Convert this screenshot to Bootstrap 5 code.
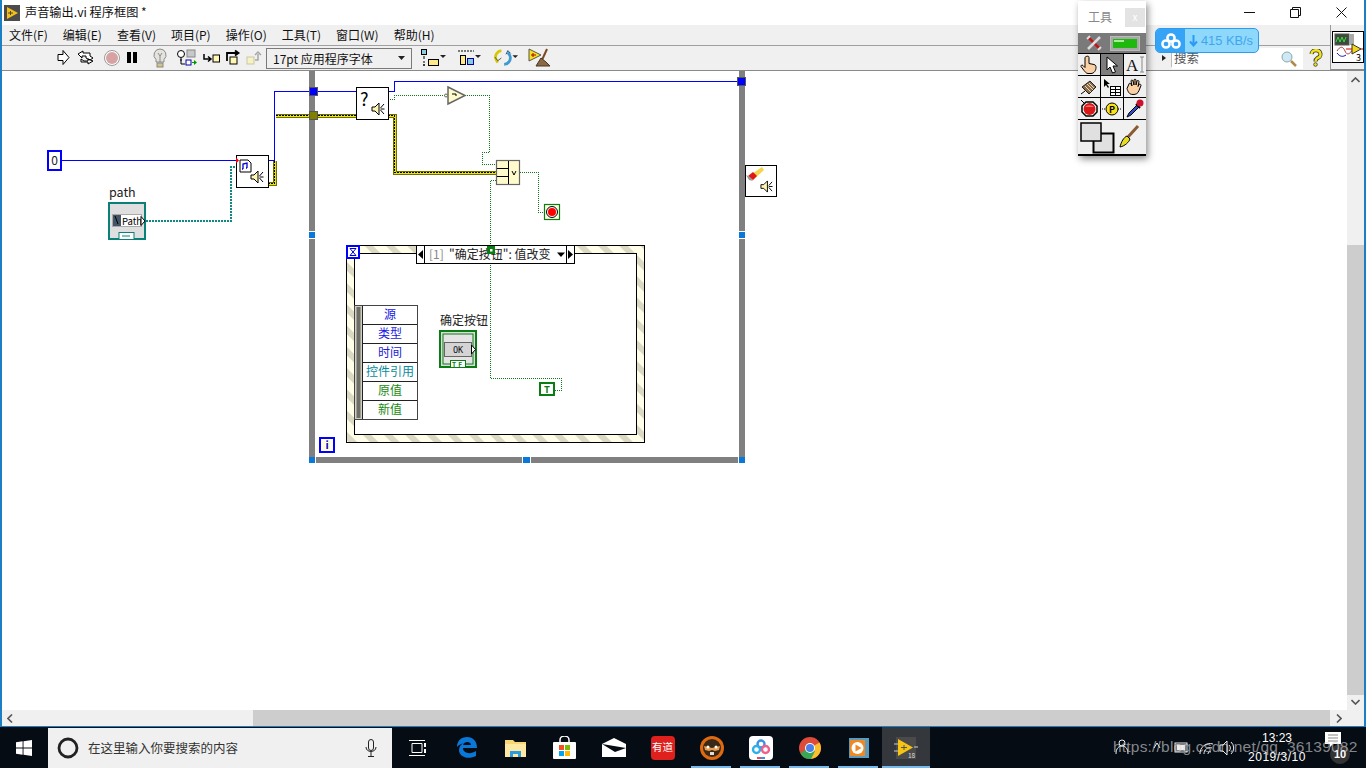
<!DOCTYPE html>
<html lang="zh">
<head>
    <meta charset="UTF-8">
    <title>声音输出.vi 程序框图 *</title>
    <link href="https://cdn.jsdelivr.net/npm/bootstrap@5.3.0/dist/css/bootstrap.min.css" rel="stylesheet">
    <style>
        html, body { height: 768px; overflow: hidden; }
        body { font-family: "Noto Sans CJK SC", "Liberation Sans", sans-serif; font-size: 12px; color: #111; background: #fff; }
        svg { display: block; flex: none; }
        svg text { font-family: "Noto Sans CJK SC", "Liberation Sans", sans-serif; }
        .wires { shape-rendering: crispEdges; }

        .lv-window { width: 1366px; height: 727px; border-left: 2px solid #1c7fc4; border-right: 2px solid #1c7fc4; border-bottom: 1px solid #1c7fc4; }
        .lv-title { height: 25px; padding-left: 2px; gap: 5px; font-size: 12.2px; }
        .lv-winbtns { margin-left: auto; }
        .lv-winbtn { width: 46px; height: 25px; }
        .lv-menu { height: 20px; background: #f0f0f0; padding-left: 7px; gap: 15px; font-size: 12px; line-height: 20px; }
        .lv-menu span { white-space: nowrap; }
        .lv-tools { height: 26px; background: #f0f0f0; border-top: 1px solid #a0a0a0; border-bottom: 1px solid #8a8a8a; padding-left: 55px; }
        .lv-combo { width: 146px; height: 21px; margin: 0 9px 0 3px; border: 1px solid #7a7a7a; padding: 0 6px; font-size: 12px; line-height: 19px; white-space: nowrap; }
        .tool-gap-a { margin-left: 11px; }
        .tool-gap-b { margin-left: 13px; }
        .tool-gap-c { margin-left: 10px; }
        .lv-search { margin-left: auto; width: 169px; height: 24px; }
        .lv-searchbox { width: 131px; height: 21px; background: #fff; color: #555; padding-left: 2px; font-size: 12.5px; line-height: 20px; }
        .lens { right: 5px; top: 2px; }
        .help-mark { margin-right: 7px; }
        .lv-vi { width: 34px; height: 45px; margin-top: -21px; border-left: 1px solid #9a9a9a; border-bottom: 1px solid #8a8a8a; background: #f0f0f0; padding: 6px 0 0 1px; z-index: 2; }

        .lv-body { height: 639px; }
        .lv-canvas { width: 1345px; height: 639px; overflow: hidden; }
        .lv-vscroll { width: 17px; background: #f0f0f0; }
        .lv-vthumb { position: absolute; left: 0; right: 0; top: 174px; height: 450px; background: #cdcdcd; }
        .arrow-up { left: 4px; top: 6px; }
        .arrow-down { left: 4px; top: 628px; }
        .lv-hscroll { height: 16px; background: #f0f0f0; padding-right: 17px; }
        .lv-hthumb { width: 1077px; height: 16px; background: #cdcdcd; margin-left: 251px; }
        .arrow-left { left: 5px; top: 4px; }
        .arrow-right { left: 1334px; top: 4px; }

        .tool-palette { position: absolute; left: 1078px; top: 1px; width: 68px; height: 155px; background: #000; box-shadow: 2px 3px 7px rgba(0,0,0,.45); z-index: 5; }
        .tool-head { height: 32px; background: #fff; color: #888; font-size: 12px; padding-left: 10px; }
        .tool-x { width: 20px; height: 19px; background: #e3e3e3; color: #fff; text-align: center; line-height: 18px; font-size: 10px; margin-left: auto; margin-right: 1px; }
        .tool-auto { height: 20px; background: #7a7a7a; padding: 0 6px 0 8px; }
        .tool-grid { display: grid; grid-template-columns: repeat(3, 22px); gap: 1px; padding-top: 1px; }
        .tool-cell { height: 21px; background: #f0f0f0; }
        .tool-cell-on { background: #7d7d7d; }
        .tool-colors { height: 34px; background: #f0f0f0; margin-top: 1px; }

        .net-speed { position: absolute; left: 1155px; top: 28px; width: 104px; height: 25px; background: #8ed8fc; border: 1px solid #2a9cf2; border-radius: 5px; overflow: hidden; z-index: 6; color: #3fa6ee; font-size: 12.8px; font-family: "Liberation Sans", sans-serif; }
        .net-logo { width: 29px; height: 100%; background: #35a3f6; }
        .net-rate { margin-left: 3px; }

        .task-bar { height: 41px; background: #060c14; color: #fff; }
        .task-start { width: 48px; }
        .task-search { width: 344px; background: #f0f0f0; color: #333; font-size: 12.5px; padding: 0 15px 0 9px; margin-top: 1px; margin-right: 1px; }
        .task-search-text { margin-left: 9px; }
        .task-icon { width: 49px; height: 41px; }
        .task-on::after { content: ""; position: absolute; left: 4px; right: 5px; bottom: 0; height: 2px; background: #76b9ed; }
        .task-active { background: #34373c; width: 48px; margin-left: -1px; }
        .task-active::after { left: 0; right: 0; }
        .youdao { width: 24px; height: 24px; background: #e0201c; color: #fff; font-size: 10.5px; line-height: 1; white-space: nowrap; }
        .tray { left: 1113px; top: 9px; }
        .task-clock { position: absolute; left: 1240px; top: 0; width: 74px; text-align: center; font-size: 12px; line-height: 19px; padding-top: 2px; font-family: "Liberation Sans", sans-serif; }
        .task-date { letter-spacing: .5px; white-space: nowrap; }
        .task-mark { position: absolute; left: 1113px; top: 8px; font-size: 15.5px; color: rgba(215,215,215,.62); white-space: nowrap; font-family: "Liberation Sans", sans-serif; letter-spacing: .2px; z-index: 3; }
        .notify-icon { left: 1325px; top: 5px; }
        .notify-count { left: 1330px; top: 17px; width: 20px; height: 20px; background: #333; font-size: 11px; font-weight: bold; font-family: "Liberation Sans", sans-serif; }
        .mono-ok { font-family: "DejaVu Sans Mono", monospace !important; }
        .serif-a { font-family: "Liberation Serif", serif !important; }
    </style>
</head>
<body class="position-relative">

<svg width="0" height="0" class="position-absolute">
    <defs>
        <pattern id="hatch" width="15" height="15" patternUnits="userSpaceOnUse" patternTransform="rotate(45)">
            <rect width="15" height="15" fill="#fffee8"/>
            <rect width="15" height="6" fill="#dbd9c4"/>
        </pattern>
        <symbol id="speaker" viewBox="0 0 14 14">
            <path d="M1 5h3l4-4v12l-4-4H1z" fill="#fff6b0" stroke="#000"/>
            <path d="M9.500 7h4M9.500 6l3.500-4M9.500 8l3.500 4" stroke="#000" fill="none"/>
        </symbol>
    </defs>
</svg>

<div class="lv-window d-flex flex-column">
    <!-- title bar -->
    <div class="lv-title d-flex align-items-center">
        <svg width="16" height="16" viewBox="0 0 16 16"><rect width="16" height="16" fill="#4b4b4b"/><path d="M3 2l11 6-11 6z" fill="#f6bf14"/><path d="M4 8h5M6.500 6v4" stroke="#444"/></svg>
        <span>声音输出.vi 程序框图 *</span>
        <div class="lv-winbtns d-flex">
            <div class="lv-winbtn d-flex align-items-center justify-content-center"><svg width="11" height="11"><path d="M0 5.500h11" stroke="#111"/></svg></div>
            <div class="lv-winbtn d-flex align-items-center justify-content-center"><svg width="11" height="11"><path d="M.5 2.500h8v8h-8zM2.500 2.500v-2h8v8h-2" fill="none" stroke="#111"/></svg></div>
            <div class="lv-winbtn d-flex align-items-center justify-content-center"><svg width="11" height="11"><path d="M.5.500l10 10M10.500.500l-10 10" stroke="#111"/></svg></div>
        </div>
    </div>

    <!-- menu bar -->
    <nav class="lv-menu d-flex">
        <span>文件(F)</span><span>编辑(E)</span><span>查看(V)</span><span>项目(P)</span><span>操作(O)</span><span>工具(T)</span><span>窗口(W)</span><span>帮助(H)</span>
    </nav>

    <!-- toolbar -->
    <div class="lv-tools d-flex align-items-center">
        <svg width="206" height="20" viewBox="0 0 206 20">
            <path d="M1 6.500h5v-4l6 7-6 7v-4H1z" fill="#fff" stroke="#000"/>
            <path d="M21 6l5-3v2h7v3l3 2-3 2-4-2v-2h-4v2zM36 13l-5 3v-2h-7v-3l3 2h4v-2z" fill="#fff" stroke="#000"/>
            <circle cx="55" cy="10" r="7.500" fill="#fff" stroke="#999"/>
            <circle cx="55" cy="10" r="6" fill="#d6a2a2"/>
            <rect x="70" y="4" width="4" height="11" fill="#000"/><rect x="76" y="4" width="4" height="11" fill="#000"/>
            <path d="M101 1a6 6 0 0 1 4 10.500V14h-8v-2.500A6 6 0 0 1 101 1z" transform="translate(2 0)" fill="#e4e4dc" stroke="#8a8a8a"/><path d="M101 5l2 3 2-3M103 8v6" fill="none" stroke="#8a8a8a"/><rect x="100" y="15" width="6" height="4" fill="#cfc48a" stroke="#8a8a8a"/>
            <circle cx="124" cy="6" r="3.500" fill="#fff" stroke="#000"/><rect x="130" y="2" width="8" height="7" fill="#c8c8c8" stroke="#888"/><path d="M124 10v6h4M123 12h2" stroke="#000" fill="none"/><rect x="129" y="12" width="5" height="5" fill="#fff" stroke="#00a"/><path d="M135 14.500h2" stroke="#090"/><path d="M137 12l3 2.500-3 2.500z" fill="#090"/>
            <path d="M147 6v5h6M151 8.500l3 2.500-3 2.500" fill="none" stroke="#000" stroke-width="1.500"/><rect x="156" y="7" width="6.500" height="7" fill="#fff8b4" stroke="#000"/>
            <path d="M170 13V5h11M178 2.500l3.500 2.500-3.500 2.500" fill="none" stroke="#000" stroke-width="1.800"/><rect x="173" y="9" width="7" height="7" fill="#fff8b4" stroke="#000"/>
            <rect x="190" y="9" width="7" height="7" fill="#f6f2c4" stroke="#c8c8a8"/><path d="M198 12h3v-6M198 7l3-3 3 3" fill="none" stroke="#a5a5a5" stroke-width="1.500"/>
        </svg>
        <div class="lv-combo d-flex justify-content-between align-items-center">
            <span>17pt 应用程序字体</span>
            <svg width="7" height="4"><path d="M0 0h7l-3.500 4z" fill="#222"/></svg>
        </div>
        <svg width="25" height="20" viewBox="0 0 25 20">
            <rect x=".5" y="1.500" width="5" height="5" fill="#8cd" stroke="#000"/><path d="M3 8v3M3 13v2" stroke="#000"/><circle cx="3" cy="17" r="1" fill="#000"/><rect x="7.500" y="11.500" width="10" height="6" fill="#ffe98a" stroke="#000"/><path d="M19 7h6l-3 3z" fill="#222"/>
        </svg>
        <svg class="tool-gap-a" width="24" height="20" viewBox="0 0 24 20">
            <path d="M1 3h16" stroke="#000" stroke-dasharray="2 1"/><rect x="3.500" y="7.500" width="5" height="9" fill="#ffe98a" stroke="#000"/><rect x="10.500" y="10.500" width="6" height="6" fill="#8cd" stroke="#00a"/><path d="M18 7h6l-3 3z" fill="#222"/>
        </svg>
        <svg class="tool-gap-b" width="24" height="20" viewBox="0 0 26 20">
            <path d="M8 2a7 7 0 0 0-6 9l2 4" fill="none" stroke="#d5c800" stroke-width="3"/><path d="M1 9l3 4 4-3" fill="none" stroke="#555"/>
            <path d="M11 17a7 7 0 0 0 6-10l-2-3" fill="none" stroke="#3d9ad0" stroke-width="3"/><path d="M13 6l2-4 3 3" fill="none" stroke="#246"/><path d="M20 7h6l-3 3z" fill="#222"/>
        </svg>
        <svg class="tool-gap-c" width="24" height="20" viewBox="0 0 24 20">
            <path d="M1 1l12 6-12 6z" fill="#f6e21a" stroke="#555"/><path d="M3 7h5M5 5v4" stroke="#a00"/>
            <path d="M19 1l-5 11" stroke="#7a4a20" stroke-width="2"/><path d="M8 18l5-8 5 4 4 4z" fill="#8a6a44" stroke="#4a3420"/>
        </svg>
        <div class="lv-search d-flex align-items-center">
            <svg width="11" height="18"><path d="M1 6l4 3-4 3z" fill="#222"/><path d="M10.500 0v18" stroke="#bbb"/></svg>
            <div class="lv-searchbox d-flex position-relative">
                <span>搜索</span>
                <svg class="position-absolute lens" width="18" height="18" viewBox="0 0 18 18"><circle cx="7" cy="7" r="5" fill="#cfe8f6" stroke="#8aa"/><path d="M11 11l5 5" stroke="#b08a4a" stroke-width="2.500"/></svg>
            </div>
            <svg class="ms-auto help-mark" width="14" height="18" viewBox="0 0 14 18"><path d="M2.500 5a4.500 4 0 1 1 6 4c-1.500 1-2 1.500-2 3.500" fill="none" stroke="#333" stroke-width="4"/><path d="M2.500 5a4.500 4 0 1 1 6 4c-1.500 1-2 1.500-2 3.500" fill="none" stroke="#f2e418" stroke-width="2.400"/><circle cx="6.500" cy="15.500" r="1.800" fill="#f2e418" stroke="#333" stroke-width=".8"/></svg>
        </div>
        <div class="lv-vi position-relative align-self-start">
            <svg width="32" height="32" viewBox="0 0 32 32"><rect x=".5" y=".5" width="31" height="31" fill="#fff" stroke="#000"/><rect x="3" y="3" width="14" height="11" fill="#3c4a3c" stroke="#555"/><path d="M4 11l2-5 2 5 2-5 2 5 2-5" fill="none" stroke="#3cdc3c"/><rect x="17" y="3" width="5" height="11" fill="#aaa"/><path d="M5 20c3-5 6-5 8 0s5 3 8-2" fill="none" stroke="#b33"/><path d="M5 22c3 4 6 4 9 2" fill="none" stroke="#11a"/><path d="M20 13l9 5-9 5z" fill="#f4d818" stroke="#333"/><path d="M14 18h6M29 18h2" stroke="#c00"/><text x="24" y="30" font-size="9" fill="#000">3</text></svg>
        </div>
    </div>

    <!-- block diagram + vertical scrollbar -->
    <div class="lv-body d-flex">
        <div class="lv-canvas position-relative">
            <svg class="position-absolute top-0 start-0" width="1345" height="639" viewBox="2 71 1345 639">
                <!-- while loop frame -->
                <rect x="309" y="60" width="6" height="403" fill="#808080"/>
                <rect x="739" y="60" width="6" height="403" fill="#808080"/>
                <rect x="309" y="457" width="436" height="6" fill="#808080"/>
                <g fill="#fff">
                    <rect x="309" y="231" width="6" height="8"/><rect x="739" y="231" width="6" height="8"/>
                    <rect x="315" y="457" width="1" height="6"/><rect x="522" y="457" width="9" height="6"/><rect x="738" y="457" width="1" height="6"/>
                </g>
                <g fill="#0a78d8">
                    <rect x="309" y="232" width="6" height="6"/><rect x="739" y="232" width="6" height="6"/>
                    <rect x="309" y="457" width="6" height="6"/><rect x="523" y="457" width="7" height="6"/><rect x="739" y="457" width="6" height="6"/>
                </g>

                <!-- event structure -->
                <rect x="346.500" y="245.500" width="298" height="197" fill="url(#hatch)" stroke="#000"/>
                <rect x="354.500" y="253.500" width="282" height="181" fill="#fff" stroke="#000"/>

                <!-- wires -->
                <g class="wires" fill="none">
                    <g stroke="#0000ff">
                        <path d="M61 160.500H236"/>
                        <path d="M268 160.500h6.500V91.500H356"/>
                        <path d="M388 91.500h6.500V81.500H738"/>
                    </g>
                    <path d="M146 221h84.500V167H236" stroke="#0e8a80" stroke-width="2" stroke-dasharray="2 1"/>
                    <path d="M276 115.500H356M388 115.500h6.500V172.500H496M268 183.500h6.500V161" stroke="#6e6e08" stroke-width="4"/>
                    <path d="M276 115.500H356M388 115.500h6.500V172.500H496M268 183.500h6.500V161" stroke="#ece410" stroke-width="2"/>
                    <path d="M276 115.500H356M388 115.500h6.500V172.500H496M268 183.500h6.500V161" stroke="#000" stroke-dasharray="2 1"/>
                    <g stroke="#0a7c14" stroke-dasharray="1 1">
                        <path d="M388 99.500h6.500V95.500H445"/>
                        <path d="M465 95.500h24.500V152.500H482.500V164.500H496"/>
                        <path d="M520 172.500h18.500V212.500H544"/>
                        <path d="M496 180.500H490.500V378.500H561.500V390.500H555"/>
                    </g>
                </g>

                <!-- tunnels -->
                <rect x="309.500" y="87.500" width="8" height="8" fill="#0000ff" stroke="#555"/>
                <rect x="309.500" y="111.500" width="8" height="8" fill="#808000" stroke="#555"/>
                <rect x="737.500" y="77.500" width="8" height="8" fill="#0000ff" stroke="#555"/>

                <!-- numeric constant -->
                <rect x="48" y="151" width="13" height="19" fill="#fff" stroke="#0000ff" stroke-width="2"/>
                <text x="54.500" y="165" font-size="12" text-anchor="middle" fill="#222">0</text>

                <!-- path terminal -->
                <text x="109" y="197" font-size="12.500" fill="#222">path</text>
                <rect x="109" y="203" width="36" height="36" fill="#dfdfdf" stroke="#0a8078" stroke-width="2"/>
                <rect x="112" y="214" width="30" height="13" fill="#aaa"/>
                <rect x="113" y="215" width="8" height="11" fill="#456"/>
                <path d="M115 216l3 8" stroke="#000"/>
                <rect x="121" y="215" width="20" height="11" fill="#fff"/>
                <text x="122" y="224.500" font-size="9.500" fill="#000">Path</text>
                <path d="M141 216.500l4 4.500-4 4.500z" fill="#fff" stroke="#000"/>
                <rect x="119" y="232.500" width="15" height="7" fill="#fff" stroke="#0a8078"/>
                <path d="M122 236h8" stroke="#0a8078"/>

                <!-- sound nodes -->
                <rect x="236.500" y="155.500" width="32" height="32" fill="#fff" stroke="#000"/>
                <path d="M240 160h8l3 3v9h-11z" fill="#fff" stroke="#000"/>
                <path d="M243 169v-5l4-1v5M243 169h-1M247 168h-1" stroke="#0000d8" fill="none" stroke-width="1.300"/>
                <use href="#speaker" x="250" y="170" width="14" height="14"/>
                <path d="M236 157.500l3 3-3 3z" fill="#f00"/>

                <rect x="356.500" y="87.500" width="32" height="32" fill="#fff" stroke="#000"/>
                <text x="360" y="106" font-size="18" fill="#000">?</text>
                <use href="#speaker" x="371" y="102" width="14" height="14"/>

                <rect x="745.500" y="165.500" width="31" height="31" fill="#fff" stroke="#000"/>
                <path d="M749 176l13-9 2 3-11 10z" fill="#f4d648"/><path d="M748 176l5-4 4 4-4 4z" fill="#e01818"/><path d="M746 175l3 5 4 1-3-4z" fill="#999"/>
                <use href="#speaker" x="760" y="180" width="13" height="13"/>

                <!-- not / compound -->
                <path d="M448 87l17 8.500-17 8.500z" fill="#fffbcc" stroke="#666" stroke-width="1.500"/>
                <circle cx="446" cy="95.500" r="1.500" fill="#fffbcc" stroke="#666"/>
                <path d="M452 94h4v2" fill="none" stroke="#000"/>

                <rect x="496.500" y="160.500" width="23" height="24" fill="#fffbcc" stroke="#666" stroke-width="1.200"/>
                <path d="M508.500 161v23M497 168.500h11M497 176.500h11" stroke="#000"/>
                <path d="M512 171l2 4 2-4" fill="none" stroke="#000"/>

                <!-- stop -->
                <rect x="544.500" y="204.500" width="15" height="15" fill="#fffde4" stroke="#0a7c14" stroke-width="1.200"/>
                <circle cx="552" cy="212" r="5.500" fill="#f8f8f8" stroke="#000"/>
                <circle cx="552" cy="212" r="4" fill="#f00"/>

                <!-- selector -->
                <rect x="416.500" y="245.500" width="158" height="18" fill="#fff" stroke="#000"/>
                <path d="M424.500 246v17M566.500 246v17" stroke="#000"/>
                <path d="M423 250v9l-5-4.500zM568 250v9l5-4.500z" fill="#000"/>
                <text x="429" y="258.500" font-size="12" fill="#888">[1]</text>
                <text x="449" y="258.500" font-size="12" fill="#222">"确定按钮": 值改变</text>
                <path d="M557 252.500h8l-4 4.500z" fill="#000"/>
                <rect x="487" y="246" width="8" height="8" fill="#0a7c14"/><rect x="490" y="249" width="2.500" height="2.500" fill="#fff"/>

                <!-- hourglass / iteration -->
                <rect x="347" y="246" width="12" height="12" fill="#fff" stroke="#0000ff" stroke-width="2"/>
                <path d="M350 248.500h6l-6 7h6z" fill="#fff" stroke="#0000c8"/>
                <rect x="320" y="438" width="14" height="14" fill="#fffde4" stroke="#0000ff" stroke-width="2"/>
                <text x="327" y="449" font-size="10.500" text-anchor="middle" font-weight="bold" fill="#0000c8">i</text>

                <!-- event data node -->
                <rect x="354.500" y="305.500" width="63" height="114" fill="#fff" stroke="#444"/>
                <rect x="355" y="306" width="7" height="113" fill="#cfcfc4"/>
                <rect x="356.500" y="307" width="4" height="111" fill="#6e6e64"/>
                <path d="M362.500 306v113M362 324.500h55M362 343.500h55M362 362.500h55M362 381.500h55M362 400.500h55" stroke="#222"/>
                <g font-size="12" text-anchor="middle">
                    <text x="390" y="319" fill="#1a1ae0">源</text>
                    <text x="390" y="338" fill="#1a1ae0">类型</text>
                    <text x="390" y="357" fill="#2020d0">时间</text>
                    <text x="390" y="376" fill="#0a8c9a">控件引用</text>
                    <text x="390" y="395" fill="#1c8a14">原值</text>
                    <text x="390" y="414" fill="#1c8a14">新值</text>
                </g>

                <!-- OK terminal -->
                <text x="440" y="325" font-size="12" fill="#222">确定按钮</text>
                <rect x="440" y="331" width="36" height="36" fill="#dcdcdc" stroke="#0a7c14" stroke-width="2"/>
                <rect x="443" y="334" width="30" height="30" fill="#e4e4e4" stroke="#0a7c14"/>
                <rect x="444.500" y="342.500" width="27" height="14" fill="#d4d4d4" stroke="#666"/>
                <text class="mono-ok" x="458" y="353" font-size="8.500" text-anchor="middle" fill="#111">OK</text>
                <path d="M471.500 345l4 4.500-4 4.500z" fill="#fff" stroke="#000"/>
                <rect x="450.500" y="360.500" width="15" height="7" fill="#fff" stroke="#0a7c14"/>
                <text x="458" y="367" font-size="6.500" text-anchor="middle" font-weight="bold" fill="#0a7c14" letter-spacing="2">TF</text>

                <!-- true constant -->
                <rect x="539" y="382" width="16" height="14" fill="#0a7c14"/>
                <rect x="541" y="384" width="12" height="10" fill="#fff"/>
                <text x="547" y="393" font-size="9.500" text-anchor="middle" font-weight="bold" fill="#0a7c14">T</text>
            </svg>
        </div>
        <div class="lv-vscroll position-relative">
            <div class="lv-vthumb"></div>
            <svg class="position-absolute arrow-up" width="9" height="6"><path d="M.5 5l4-4 4 4" fill="none" stroke="#555" stroke-width="1.600"/></svg>
            <svg class="position-absolute arrow-down" width="9" height="6"><path d="M.5 1l4 4 4-4" fill="none" stroke="#555" stroke-width="1.600"/></svg>
        </div>
    </div>

    <!-- horizontal scrollbar -->
    <div class="lv-hscroll d-flex position-relative">
        <svg class="position-absolute arrow-left" width="6" height="9"><path d="M5 .500l-4 4 4 4" fill="none" stroke="#555" stroke-width="1.600"/></svg>
        <div class="lv-hthumb"></div>
        <svg class="position-absolute arrow-right" width="6" height="9"><path d="M1 .500l4 4-4 4" fill="none" stroke="#555" stroke-width="1.600"/></svg>
    </div>
</div>

<!-- tools palette -->
<div class="tool-palette">
    <div class="tool-head d-flex align-items-center"><span>工具</span><div class="tool-x">x</div></div>
    <div class="tool-auto d-flex align-items-center justify-content-between">
        <svg width="16" height="16" viewBox="0 0 16 16"><path d="M2 2l12 12" stroke="#c01818" stroke-width="2.500"/><path d="M14 2L2 14" stroke="#ddd" stroke-width="2.500"/><path d="M1 4l3-3M12 15l3-3" stroke="#ddd" stroke-width="2"/></svg>
        <svg width="30" height="15"><rect x=".5" y=".5" width="29" height="14" fill="#a8a8a8" stroke="#bbb"/><rect x="3" y="3" width="24" height="9" fill="#1fb80f"/><rect x="4" y="4" width="10" height="2" fill="#a6ee9a"/></svg>
    </div>
    <div class="tool-grid">
        <div class="tool-cell d-flex align-items-center justify-content-center"><svg width="18" height="19" viewBox="0 0 18 19"><path d="M7 1.500c1-1 2 0 2 1v6l5 1c2 .5 2 2 2 3 0 3-2 6-5 6H8c-2 0-3-2-4-3l-3-4c-.5-1 1-2 2-1l2 2V3c0-1 1-2 2-1.500z" fill="#fbd0a4" stroke="#000"/></svg></div>
        <div class="tool-cell tool-cell-on d-flex align-items-center justify-content-center"><svg width="13" height="18" viewBox="0 0 13 18"><path d="M1 1v13l3-3 2.500 6 3-1-2.500-6h4.500z" fill="#fff" stroke="#000"/></svg></div>
        <div class="tool-cell d-flex align-items-center justify-content-center"><svg width="20" height="20" viewBox="0 0 20 20"><text class="serif-a" x="1" y="16" font-size="17" fill="#111">A</text><path d="M17 2v15M15 2h4M15 17h4" stroke="#888"/></svg></div>
        <div class="tool-cell d-flex align-items-center justify-content-center"><svg width="18" height="18" viewBox="0 0 18 18"><path d="M2 9l8-6 6 6-7 7z" fill="#8a6a48" stroke="#222"/><path d="M5 8l6 6M7 6l6 6M9 5l5 5" stroke="#e8d8b8"/><path d="M1 16l4-3" stroke="#000"/></svg></div>
        <div class="tool-cell d-flex align-items-center justify-content-center"><svg width="18" height="18" viewBox="0 0 18 18"><path d="M1 1v8l2-2 2 3 1-1-2-3h3z" fill="#000"/><rect x="7.500" y="8.500" width="10" height="9" fill="#fff" stroke="#000"/><path d="M8 11.500h9M8 14.500h9M12.500 9v8" stroke="#000"/></svg></div>
        <div class="tool-cell d-flex align-items-center justify-content-center"><svg width="18" height="18" viewBox="0 0 18 18"><path d="M3 6c0-1 1.500-1 2 0l1 2-1-5c0-1 1.500-1.500 2 0l1 4V2c0-1 2-1 2 0v5l1-4c.5-1 2-.5 2 .5l-1 5 1-2c1-1 2 0 2 1l-2 5c-1 3-3 4-6 4-4 0-5-3-6-6z" fill="#fbd0a4" stroke="#000"/></svg></div>
        <div class="tool-cell d-flex align-items-center justify-content-center"><svg width="19" height="19" viewBox="0 0 19 19"><path d="M6 3h7l4 4v6l-4 4H6l-4-4V7z" fill="#fff" stroke="#000" stroke-width="1.500"/><circle cx="9.500" cy="10" r="6" fill="#d81818"/><path d="M5 8a5 3 0 0 1 9 0" fill="#f07070"/><path d="M1 1l3 3" stroke="#000"/></svg></div>
        <div class="tool-cell d-flex align-items-center justify-content-center"><svg width="20" height="16" viewBox="0 0 20 16"><path d="M0 8h4M16 8h4" stroke="#000" stroke-dasharray="1 1"/><circle cx="10" cy="8" r="6" fill="#f6e21a" stroke="#000"/><text x="10" y="11.500" font-size="9" font-weight="bold" text-anchor="middle" fill="#000">P</text></svg></div>
        <div class="tool-cell d-flex align-items-center justify-content-center"><svg width="18" height="19" viewBox="0 0 18 19"><path d="M1 18l2-4 8-8 2 2-8 8z" fill="#3050c8" stroke="#000"/><path d="M10 5l4 4" stroke="#000" stroke-width="2"/><circle cx="14" cy="4" r="3.500" fill="#d01030"/></svg></div>
    </div>
    <div class="tool-colors d-flex align-items-center">
        <svg width="66" height="34" viewBox="0 0 66 34">
            <rect x="15.500" y="13.500" width="20" height="19" fill="#e0e0e0" stroke="#000" stroke-width="2"/>
            <rect x="3" y="3" width="20" height="18" fill="#e0e0e0" stroke="#000" stroke-width="1.500"/>
            <path d="M60 6L50 17" stroke="#8a5a30" stroke-width="3"/><path d="M42 27c1-5 4-10 7-11l3 3c-1 3-5 7-10 8z" fill="#e8dc20" stroke="#000"/>
        </svg>
    </div>
</div>

<!-- download speed widget -->
<div class="net-speed d-flex align-items-center">
    <div class="net-logo d-flex align-items-center justify-content-center">
        <svg width="20" height="16" viewBox="0 0 20 16"><g fill="none" stroke="#fff" stroke-width="2.500"><circle cx="10" cy="5" r="3.600"/><circle cx="5" cy="11" r="3.600"/><circle cx="15" cy="11" r="3.600"/></g></svg>
    </div>
    <svg class="ms-1" width="9" height="12"><path d="M4.500 0v10M1 6.500l3.500 4 3.500-4" fill="none" stroke="#2b9af3" stroke-width="2"/></svg>
    <span class="net-rate">415 KB/s</span>
</div>

<!-- taskbar -->
<div class="task-bar d-flex position-relative">
    <div class="task-start d-flex align-items-center justify-content-center">
        <svg width="16" height="16" viewBox="0 0 16 16"><path d="M0 2.300l6.600-1v6.200H0zM7.500 1.200L16 0v7.500H7.500zM0 8.500h6.600v6.200L0 13.700zM7.500 8.500H16V16l-8.500-1.200z" fill="#fff"/></svg>
    </div>
    <div class="task-search d-flex align-items-center">
        <svg width="22" height="22" viewBox="0 0 22 22"><circle cx="11" cy="11" r="9" fill="none" stroke="#222" stroke-width="2.800"/></svg>
        <span class="task-search-text">在这里输入你要搜索的内容</span>
        <svg class="ms-auto" width="12" height="18" viewBox="0 0 12 18"><rect x="3.500" y=".5" width="5" height="11" rx="2.500" fill="none" stroke="#222"/><path d="M1 8c0 6 10 6 10 0M6 13v4M3 17.500h6" fill="none" stroke="#222"/></svg>
    </div>
    <div class="task-icon d-flex align-items-center justify-content-center">
        <svg width="18" height="16" viewBox="0 0 18 16"><path d="M3 3.500h10v9H3zM0 .5h16M0 15.500h16" fill="none" stroke="#fff"/><rect x="15" y="3" width="2" height="4" fill="#fff"/><rect x="15" y="9" width="2" height="4" fill="#fff"/></svg>
    </div>
    <div class="task-icon d-flex align-items-center justify-content-center">
        <svg width="22" height="21" viewBox="0 0 22 21"><path d="M1 10C1 4 5 0 11 0c6 0 10 4 10 11H7c0 5 7 7 13 3v5c-8 4-17 1-17-6 0-3 2-6 5-7-3 1-6 2-7 4zM7 8h8c0-4-7-4-8 0z" fill="#0a78d8"/></svg>
    </div>
    <div class="task-icon d-flex align-items-center justify-content-center">
        <svg width="22" height="20" viewBox="0 0 22 20"><path d="M0 2h8l2 2h11v15H0z" fill="#f7d774"/><rect x="0" y="6" width="21" height="13" fill="#fde9a4"/><path d="M5 19v-6h11v6h-3v-3H8v3z" fill="#2a9ce0"/></svg>
    </div>
    <div class="task-icon d-flex align-items-center justify-content-center">
        <svg width="23" height="23" viewBox="0 0 23 23"><path d="M7 6V4a4.500 4 0 0 1 9 0v2" fill="none" stroke="#fff" stroke-width="1.500"/><rect y="6" width="23" height="17" rx="1" fill="#fff"/><rect x="6" y="9" width="5" height="5" fill="#f25022"/><rect x="12" y="9" width="5" height="5" fill="#7fba00"/><rect x="6" y="15" width="5" height="5" fill="#00a4ef"/><rect x="12" y="15" width="5" height="5" fill="#ffb900"/></svg>
    </div>
    <div class="task-icon d-flex align-items-center justify-content-center">
        <svg width="24" height="19" viewBox="0 0 24 19"><path d="M0 6L12 0l12 6v13H0z" fill="#fff"/><path d="M0 6l24 4-11 4z" fill="#060c14"/></svg>
    </div>
    <div class="task-icon d-flex align-items-center justify-content-center">
        <div class="youdao d-flex align-items-center justify-content-center rounded-1">有道</div>
    </div>
    <div class="task-icon d-flex align-items-center justify-content-center task-on position-relative">
        <svg width="24" height="24" viewBox="0 0 24 24"><circle cx="12" cy="12" r="12" fill="#e06a10"/><circle cx="12" cy="12" r="9" fill="#3a2818"/><path d="M4 10l8 2 8-2-1 4-4 1-3-1-3 1-4-1z" fill="#e8a050"/><circle cx="8" cy="11" r="1.500" fill="#fff"/><circle cx="16" cy="11" r="1.500" fill="#fff"/><rect x="10" y="16" width="4" height="3" fill="#ddd"/></svg>
    </div>
    <div class="task-icon d-flex align-items-center justify-content-center task-on position-relative">
        <svg width="24" height="24" viewBox="0 0 24 24"><rect width="24" height="24" rx="4" fill="#fff"/><g fill="none" stroke-width="2.400"><circle cx="12" cy="8" r="3.500" stroke="#3a8fe8"/><circle cx="7.500" cy="13.500" r="3.500" stroke="#2bb0e8"/><circle cx="16.500" cy="13.500" r="3.500" stroke="#f0608a"/></g><rect x="8" y="21" width="4" height="2" fill="#e84a5a"/><rect x="12" y="21" width="4" height="2" fill="#3a8fe8"/></svg>
    </div>
    <div class="task-icon d-flex align-items-center justify-content-center task-on position-relative">
        <svg width="22" height="22" viewBox="0 0 22 22"><circle cx="11" cy="11" r="11" fill="#dd4b39"/><path d="M11 11l0 11a11 11 0 0 0 9.500-16.500z" fill="#fbc02d"/><path d="M6 13L1.500 16.500A11 11 0 0 0 12 22l4-8z" fill="#3aa757"/><circle cx="11" cy="11" r="5" fill="#fff"/><circle cx="11" cy="11" r="4" fill="#4a80e8"/></svg>
    </div>
    <div class="task-icon d-flex align-items-center justify-content-center task-on position-relative">
        <svg width="20" height="20" viewBox="0 0 20 20"><rect width="20" height="20" fill="#5a9ac0"/><rect x="1" y="2" width="15" height="16" fill="#f08a20"/><circle cx="8.500" cy="10" r="6" fill="#fff"/><path d="M6.500 6.500l6 3.500-6 3.500z" fill="#f08a20"/></svg>
    </div>
    <div class="task-icon task-active d-flex align-items-center justify-content-center task-on position-relative">
        <svg width="24" height="22" viewBox="0 0 24 22"><rect x="2" y="0" width="20" height="22" fill="#4a4a4a"/><path d="M0 7h4M0 14h4M20 10h4" stroke="#ccc"/><path d="M4 2l15 8.500L4 19z" fill="#f6c514"/><path d="M7 10.500h6M10 8v5" stroke="#555"/><text x="14" y="21" font-size="6.500" fill="#ddd">18</text></svg>
    </div>

    <!-- tray -->
    <svg class="position-absolute tray" width="130" height="24" viewBox="0 0 130 24">
        <g fill="none" stroke="#eee">
            <circle cx="9" cy="7" r="3"/><path d="M3 18c0-6 3-8 6-8s6 2 6 8"/>
            <path d="M41 12l3-5 3 5"/>
            <rect x="62" y="7" width="12" height="9"/><rect x="64" y="9" width="8" height="5" fill="#eee"/>
            <path d="M87 18a10 10 0 0 1 13-10M91 18a6 6 0 0 1 8-6M95 18a2 2 0 0 1 3-2"/>
            <path d="M107 9h3l4-4v14l-4-4h-3zM116 9a4 4 0 0 1 0 6M118 6a8 8 0 0 1 0 12"/>
        </g>
    </svg>
    <div class="task-clock"><div>13:23</div><div class="task-date">2019/3/10</div></div>
    <div class="task-mark">https://blog.csdn.net/qq_36139082</div>
    <svg class="position-absolute notify-icon" width="18" height="16" viewBox="0 0 18 16"><path d="M0 0h16v12H8l-3 3v-3H0z" fill="#fff"/><path d="M3 3h10M3 6h10M3 9h10" stroke="#888"/></svg>
    <div class="position-absolute notify-count d-flex align-items-center justify-content-center rounded-circle">10</div>
</div>

<script src="https://cdn.jsdelivr.net/npm/bootstrap@5.3.0/dist/js/bootstrap.bundle.min.js"></script>
</body>
</html>
